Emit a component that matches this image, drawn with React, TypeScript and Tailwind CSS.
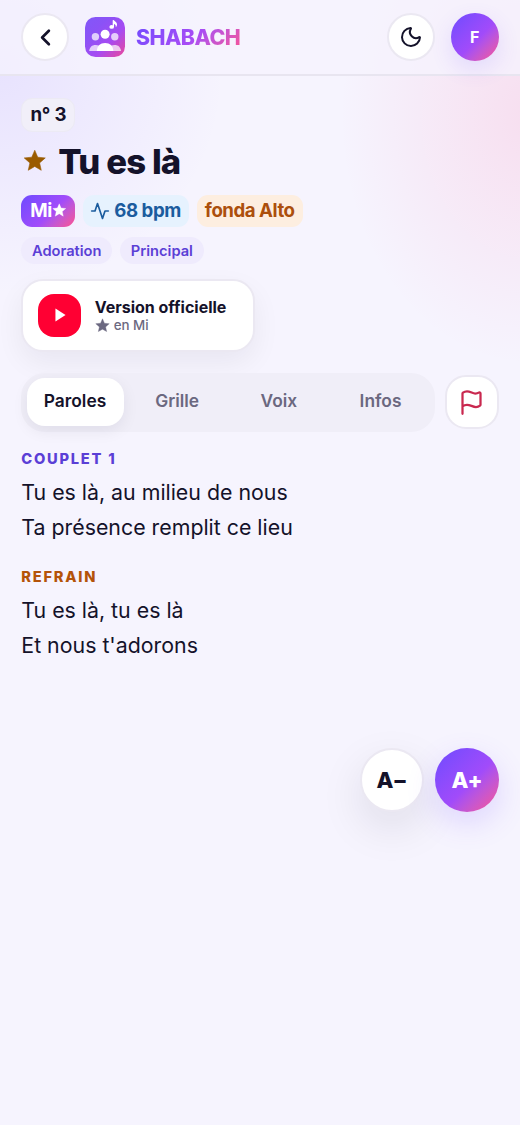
import { ChevronLeft, Flag, Moon } from "lucide-react";

const tabs = ["Paroles", "Grille", "Voix", "Infos"];

const tags = ["Adoration", "Principal"];

const sections = [
  {
    label: "Couplet 1",
    tone: "text-[#5b3fd6]",
    lines: ["Tu es là, au milieu de nous", "Ta présence remplit ce lieu"],
  },
  {
    label: "Refrain",
    tone: "text-[#b45309]",
    lines: ["Tu es là, tu es là", "Et nous t'adorons"],
  },
];

function Star({ className }: { className?: string }) {
  return (
    <svg className={className} viewBox="0 0 24 24" fill="currentColor" stroke="currentColor" strokeWidth="0.6" strokeLinejoin="round" aria-hidden="true">
      <path d="M12 1.3l3.06 7.09 7.69.71-5.8 5.11 1.69 7.53L12 17.8l-6.64 3.94 1.69-7.53L1.25 9.1l7.69-.71z" />
    </svg>
  );
}

function Logo() {
  return (
    <svg className="size-[40px] shrink-0" viewBox="0 0 40 40" aria-hidden="true">
      <defs>
        <linearGradient id="logo-bg" x1="0" y1="0" x2="1" y2="1">
          <stop offset="0" stopColor="#8257f8" />
          <stop offset="0.3" stopColor="#8b52f6" />
          <stop offset="0.62" stopColor="#a64bf2" />
          <stop offset="1" stopColor="#ec4899" />
        </linearGradient>
      </defs>
      <rect width="40" height="40" rx="10.5" fill="url(#logo-bg)" />
      <g fill="#fff" opacity="0.72">
        <circle cx="10.4" cy="19.7" r="3.7" />
        <circle cx="29.8" cy="19.7" r="3.7" />
        <path d="M4.2 34c.5-3.9 2.7-6 6.4-6 2.5 0 4 .8 5.2 2.4L14 34z" />
        <path d="M36 34c-.5-3.9-2.7-6-6.4-6-2.5 0-4 .8-5.2 2.4L26 34z" />
      </g>
      <circle cx="20.1" cy="17.3" r="4.5" fill="#fff" />
      <path d="M11.8 34c.5-5.2 3.3-8 8.3-8s7.8 2.8 8.3 8z" fill="#fff" />
      <g fill="#fff">
        <ellipse cx="26.7" cy="9.9" rx="2.3" ry="1.9" />
        <path d="M27.7 3.2l1.3-.2c.2 1.5 3 1.5 3 4.5 0 1.2-.5 2.1-1.3 2.7.4-1.8-.2-2.8-1.7-3.3v3.2h-1.3z" />
      </g>
    </svg>
  );
}

function Header() {
  return (
    <header className="flex h-[76px] items-center border-b-2 border-[#e8e5f0] bg-[#f5f3fd]/75 px-[21.33px]">
      <button
        type="button"
        aria-label="Retour"
        className="flex size-12 shrink-0 items-center justify-center rounded-full border-2 border-[#ebe8f2] bg-white text-[#14122a]"
      >
        <ChevronLeft size={27} strokeWidth={2.4} />
      </button>
      <div className="ml-4 flex items-center gap-[10.67px]">
        <Logo />
        <span className="bg-linear-135 from-[#6d4aff] via-[#a84bf5] via-55% to-[#ff4d8d] bg-clip-text pt-0.5 text-[21.33px] font-extrabold tracking-[-0.025em] text-transparent">
          SHABACH
        </span>
      </div>
      <div className="ml-auto flex items-center gap-4">
        <button
          type="button"
          aria-label="Thème sombre"
          className="flex size-12 items-center justify-center rounded-full border-2 border-[#ebe8f2] bg-white text-[#14122a]"
        >
          <Moon size={24} strokeWidth={2} />
        </button>
        <span className="flex size-12 items-center justify-center rounded-full bg-linear-135 from-[#6d4aff] via-[#a14bfa] via-55% to-[#ff4d8d] text-base font-bold text-white shadow-[0_8px_22px_rgba(109,74,255,0.14)]">
          F
        </span>
      </div>
    </header>
  );
}

function SongHeading() {
  return (
    <section>
      <span className="flex h-[34px] w-[54px] items-center justify-center rounded-[11px] border border-[#eceaf4] bg-[#f1eff9] text-[18.67px] font-bold tracking-[-0.01em] text-[#14122a]">
        n° 3
      </span>
      <div className="mt-1.5 flex h-[46px] items-center gap-3 pl-[1.5px]">
        <Star className="mt-px size-[23.5px] text-[#9a5b00]" />
        <h1 className="text-[34.67px] font-extrabold tracking-[-0.025em] text-[#14122a]">Tu es là</h1>
      </div>
      <div className="mt-[11px] flex h-8 items-center gap-2 text-[18.67px] font-bold tracking-[-0.025em]">
        <span className="flex h-8 w-[54px] items-center justify-center rounded-[11px] bg-linear-135 from-[#6d4aff] via-[#a14bfa] via-55% to-[#ff4d8d] text-white">
          Mi
          <Star className="size-[14.5px]" />
        </span>
        <span className="flex h-8 w-[106px] items-center gap-1 rounded-[11px] bg-[#e6f2fe] pl-[7px] text-[#1b5c9e]">
          <svg className="size-5" viewBox="0 0 24 24" fill="none" stroke="currentColor" strokeWidth="2" strokeLinecap="round" strokeLinejoin="round">
            <path d="M2 12h4l3-9 6 18 3-9h4" />
          </svg>
          68 bpm
        </span>
        <span className="flex h-8 w-[106px] items-center rounded-[11px] bg-[#fdeee0] px-[7.5px] whitespace-nowrap text-[#ac4f0c]">
          fonda Alto
        </span>
      </div>
      <div className="mt-[10px] flex gap-2">
        {tags.map((tag) => (
          <span
            key={tag}
            className="flex h-[27px] items-center rounded-full bg-[#efebfd] px-[10.67px] pt-px text-[14.67px] font-semibold text-[#5b3fd6]"
          >
            {tag}
          </span>
        ))}
      </div>
    </section>
  );
}

function OfficialVersion() {
  return (
    <a
      href="#"
      className="mt-[15.5px] flex h-[72.5px] w-[233.5px] items-center gap-[13.33px] rounded-[22px] border-2 border-[#ebe8f2] bg-white pl-[15px] shadow-[0_11px_28px_rgba(20,18,42,0.06)]"
    >
      <span className="flex size-[43px] items-center justify-center rounded-2xl bg-[#ff0033] text-white">
        <svg className="ml-0.5 h-[14px] w-[11px]" viewBox="0 0 12 15" fill="currentColor" aria-hidden="true">
          <path d="M0.5 0.5v14l11-7z" />
        </svg>
      </span>
      <span className="flex flex-col">
        <span className="text-base leading-5 font-bold text-[#14122a]">Version officielle</span>
        <span className="flex items-center gap-[4px] text-[13.33px] leading-[17px] font-medium text-[#6b6880]">
          <Star className="size-[15px]" />
          en Mi
        </span>
      </span>
    </a>
  );
}

function Tabs() {
  return (
    <div className="mt-[21px] flex items-center gap-[10px]">
      <div className="grid h-[59px] w-[414px] grid-cols-4 gap-1 rounded-[24px] bg-[#f0eef8] p-[5.33px]">
        {tabs.map((tab, i) => (
          <button
            key={tab}
            type="button"
            className={
              i === 0
                ? "rounded-[18px] bg-white pr-px pb-0.5 text-[17.33px] font-semibold text-[#14122a] shadow-[0_5px_16px_rgba(20,18,42,0.07)]"
                : "rounded-[18px] pb-0.5 text-[17.33px] font-semibold text-[#6b6880]"
            }
          >
            {tab}
          </button>
        ))}
      </div>
      <button
        type="button"
        aria-label="Signaler"
        className="flex size-[54px] shrink-0 items-center justify-center rounded-[21px] border-2 border-[#ebe8f2] bg-white text-[#c9284f]"
      >
        <Flag size={27} strokeWidth={2} />
      </button>
    </div>
  );
}

function Lyrics() {
  return (
    <div className="mt-[16.5px]">
      {sections.map((section) => (
        <section key={section.label} className="mb-[21.5px]">
          <h2 className={`text-[14.67px] leading-[22px] font-extrabold tracking-[0.12em] uppercase ${section.tone}`}>
            {section.label}
          </h2>
          <div className="mt-[5.25px] text-[21.33px] leading-[34.67px] text-[#14122a]">
            {section.lines.map((line) => (
              <p key={line}>{line}</p>
            ))}
          </div>
        </section>
      ))}
    </div>
  );
}

export default function App() {
  return (
    <div className="relative h-[1125px] w-[520px] overflow-hidden bg-[#f6f4fe] bg-[radial-gradient(circle_at_0px_70px,rgba(109,74,255,0.1),transparent_225px),radial-gradient(190px_250px_at_530px_115px,rgba(255,77,141,0.13),transparent)] font-[Inter,sans-serif] antialiased">
      <Header />
      <main className="px-[21.33px] pt-[21.5px]">
        <SongHeading />
        <OfficialVersion />
        <Tabs />
        <Lyrics />
      </main>
      <div className="absolute top-[748px] right-[21px] flex gap-[11px] text-[22px] font-extrabold tracking-[-0.01em]">
        <button
          type="button"
          className="size-16 rounded-full border-2 border-[#ebe8f2] bg-white text-[#14122a] shadow-[0_16px_44px_rgba(20,18,42,0.1)]"
        >
          A−
        </button>
        <button
          type="button"
          className="size-16 rounded-full bg-linear-135 from-[#6d4aff] via-[#a14bfa] via-55% to-[#ff4d8d] text-white shadow-[0_11px_30px_rgba(109,74,255,0.18)]"
        >
          A+
        </button>
      </div>
    </div>
  );
}
